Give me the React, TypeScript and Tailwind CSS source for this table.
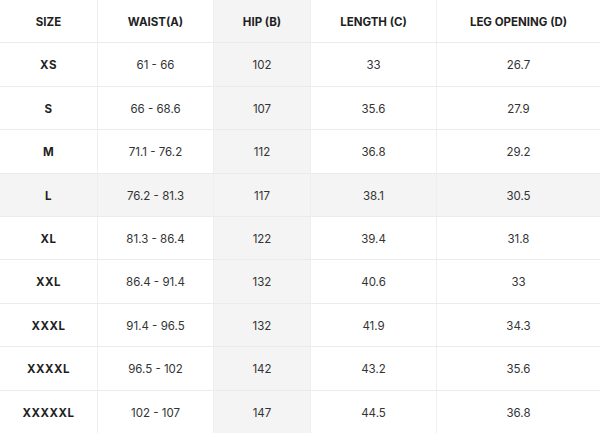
const COLS = [
  { key: "size", label: "SIZE", width: "w-[98px]" },
  { key: "waist", label: "WAIST(A)", width: "w-[116px]" },
  { key: "hip", label: "HIP (B)", width: "w-[97px]" },
  { key: "length", label: "LENGTH (C)", width: "w-[126px]" },
  { key: "leg", label: "LEG OPENING (D)", width: "flex-1" },
];

const ROWS = [
  ["XS", "61 - 66", "102", "33", "26.7"],
  ["S", "66 - 68.6", "107", "35.6", "27.9"],
  ["M", "71.1 - 76.2", "112", "36.8", "29.2"],
  ["L", "76.2 - 81.3", "117", "38.1", "30.5"],
  ["XL", "81.3 - 86.4", "122", "39.4", "31.8"],
  ["XXL", "86.4 - 91.4", "132", "40.6", "33"],
  ["XXXL", "91.4 - 96.5", "132", "41.9", "34.3"],
  ["XXXXL", "96.5 - 102", "142", "43.2", "35.6"],
  ["XXXXXL", "102 - 107", "147", "44.5", "36.8"],
];

export default function App() {
  return (
    <div className="h-[433px] w-[600px] overflow-hidden bg-white font-['Inter',sans-serif] text-[11.5px] text-[#1f1f1f]">
      {/* header */}
      <div className="flex h-[43.4px] border-b border-[#ebebeb]">
        {COLS.map((c, i) => (
          <div
            key={c.key}
            className={`${c.width} flex items-center justify-center pt-[3px] font-bold ${
              i < COLS.length - 1 ? "border-r border-[#efefef]" : ""
            } ${i === 2 ? "bg-[#f4f4f4]" : ""}`}
          >
            {c.label}
          </div>
        ))}
      </div>

      {ROWS.map((r) => (
        <div
          key={r[0]}
          className={`flex h-[43.4px] border-b border-[#ebebeb] ${r[0] === "L" ? "bg-[#f4f4f4]" : ""}`}
        >
          {r.map((v, i) => (
            <div
              key={i}
              className={`${COLS[i].width} flex items-center justify-center pt-[3px] ${
                i === 0 ? "font-bold tracking-[0.5px]" : "text-[#333]"
              } ${i < COLS.length - 1 ? "border-r border-[#efefef]" : ""} ${
                i === 2 ? "bg-[#f4f4f4]" : ""
              }`}
            >
              {v}
            </div>
          ))}
        </div>
      ))}
    </div>
  );
}
